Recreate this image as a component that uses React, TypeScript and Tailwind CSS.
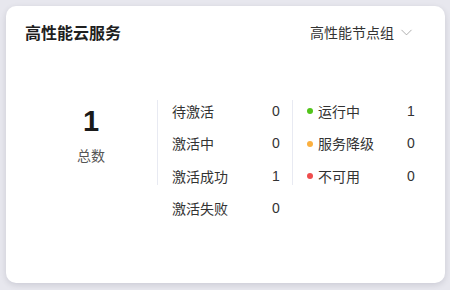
import { ChevronDown } from "lucide-react";

const activation = [
  { label: "待激活", value: 0 },
  { label: "激活中", value: 0 },
  { label: "激活成功", value: 1 },
  { label: "激活失败", value: 0 },
];

const health = [
  { label: "运行中", value: 1, dot: "bg-[#52c41a]" },
  { label: "服务降级", value: 0, dot: "bg-[#fbb040]" },
  { label: "不可用", value: 0, dot: "bg-[#ef4d4d]" },
];

const font = { fontFamily: '"Noto Sans CJK SC", "Noto Sans", sans-serif' };

export default function App() {
  return (
    <div className="w-[450px] h-[290px] bg-[#e7e7ee] pt-[6px] pl-[6px]" style={font}>
      <div className="w-[439px] h-[277px] bg-white rounded-[10px] shadow-[0_2px_6px_rgba(0,0,30,0.12)] px-[19px] pt-[14px]">
        {/* header */}
        <div className="flex items-center justify-between h-6">
          <span className="text-[16px] leading-6 font-bold text-[#1f1f1f]">高性能云服务</span>
          <div className="flex items-center gap-[3px] mr-[10px] text-[#333]">
            <span className="text-[14px] leading-6">高性能节点组</span>
            <ChevronDown className="w-[19px] h-[19px] text-[#999]" strokeWidth={1} />
          </div>
        </div>

        {/* stats */}
        <div className="flex mt-[51px]">
          <div className="w-[132px] flex flex-col items-center pt-[8px]">
            <span className="text-[29px] leading-9 font-bold text-[#1a1a1a]" style={{ fontFamily: '"Liberation Sans", sans-serif' }}>1</span>
            <span className="text-[14px] leading-[22px] mt-[5px] text-[#555]">总数</span>
          </div>
          <div className="w-px h-[85px] mt-[5px] bg-[#e8eaf2]" />
          <div className="w-[134px] pl-[14px] flex flex-col">
            {activation.map((row) => (
              <div key={row.label} className="h-[32.5px] flex items-center text-[14px] text-[#333]">
                <span className="w-[100px]">{row.label}</span>
                <span style={{ fontFamily: '"Liberation Sans", sans-serif' }}>{row.value}</span>
              </div>
            ))}
          </div>
          <div className="w-px h-[85px] mt-[5px] bg-[#e8eaf2]" />
          <div className="pl-[14px] flex flex-col">
            {health.map((row) => (
              <div key={row.label} className="h-[32.5px] flex items-center text-[14px] text-[#333]">
                <span className={`w-[6px] h-[6px] rounded-full ${row.dot}`} />
                <span className="w-[89px] ml-[5px]">{row.label}</span>
                <span style={{ fontFamily: '"Liberation Sans", sans-serif' }}>{row.value}</span>
              </div>
            ))}
          </div>
        </div>
      </div>
    </div>
  );
}
